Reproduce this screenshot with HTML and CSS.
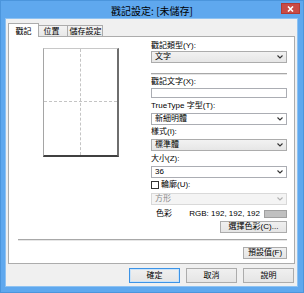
FILE: index.html
```html
<!DOCTYPE html>
<html lang="zh-Hant">
<head>
<meta charset="utf-8">
<link rel="stylesheet" href="styles.css">
</head>
<body>
<div class="window">
  <div class="titlebar">
    <span class="title">戳記設定: [未儲存]</span>
    <span class="close"><svg width="7" height="6" viewBox="0 0 7 6"><path d="M1 0.5 L6 5.5 M6 0.5 L1 5.5" stroke="#fff" stroke-width="1.6"/></svg></span>
  </div>
  <div class="client">
    <div class="tabs">
      <div class="tab active">戳記</div>
      <div class="tab t2">位置</div>
      <div class="tab t3">儲存設定</div>
      <div class="tabfill"></div>
    </div>
    <div class="panel">
      <div class="main">
        <div class="preview">
          <div class="vline"></div>
          <div class="hline"></div>
        </div>
        <div class="form">
          <div class="label">戳記類型(Y):</div>
          <div class="select"><span>文字</span><svg class="chev" width="6" height="4" viewBox="0 0 6 4"><polyline points="0.5,0.5 3,3 5.5,0.5" fill="none" stroke="#333" stroke-width="1.1"/></svg></div>
          <div class="sep"></div>
          <div class="label l2">戳記文字(X):</div>
          <div class="input"></div>
          <div class="label l3">TrueType 字型(T):</div>
          <div class="select white m2"><span>新細明體</span><svg class="chev" width="6" height="4" viewBox="0 0 6 4"><polyline points="0.5,0.5 3,3 5.5,0.5" fill="none" stroke="#333" stroke-width="1.1"/></svg></div>
          <div class="label l2">樣式(I):</div>
          <div class="select m2"><span>標準體</span><svg class="chev" width="6" height="4" viewBox="0 0 6 4"><polyline points="0.5,0.5 3,3 5.5,0.5" fill="none" stroke="#333" stroke-width="1.1"/></svg></div>
          <div class="label l3">大小(Z):</div>
          <div class="select white m2"><span>36</span><svg class="chev" width="6" height="4" viewBox="0 0 6 4"><polyline points="0.5,0.5 3,3 5.5,0.5" fill="none" stroke="#333" stroke-width="1.1"/></svg></div>
          <div class="check-row"><span class="box"></span><span>輪廓(U):</span></div>
          <div class="select disabled m3"><span>方形</span><svg class="chev" width="6" height="4" viewBox="0 0 6 4"><polyline points="0.5,0.5 3,3 5.5,0.5" fill="none" stroke="#b0b0b0" stroke-width="1.1"/></svg></div>
          <div class="color-row"><span class="clabel">色彩</span><span class="rgb">RGB: 192, 192, 192</span><span class="swatch"></span></div>
          <div class="btn-row"><div class="btn pick">選擇色彩(C)...</div></div>
        </div>
      </div>
      <div class="sep wide"></div>
      <div class="btn-row def-row"><div class="btn def">預設值(F)</div></div>
    </div>
    <div class="buttons">
      <div class="btn big default">確定</div>
      <div class="btn big">取消</div>
      <div class="btn big">說明</div>
    </div>
  </div>
</div>
</body>
</html>
```
FILE: styles.css
```css
* { box-sizing: border-box; }
html, body { margin: 0; padding: 0; }
body {
  font-family: "Liberation Sans", "Noto Sans CJK TC", sans-serif;
  font-size: 8px;
  color: #000;
  background: #fff;
}
.window {
  width: 304px;
  height: 293px;
  background: #5fa8ee;
  display: flex;
  flex-direction: column;
  box-shadow: inset 0 0 0 1px #4b95dc;
}
.titlebar {
  height: 19px;
  display: grid;
  grid-template-columns: 1fr auto 1fr;
}
.title {
  grid-column: 2;
  font-size: 10px;
  line-height: 19px;
  padding-top: 1px;
  font-family: "Noto Sans CJK TC", sans-serif;
}
.close {
  grid-column: 3;
  justify-self: end;
  align-self: start;
  width: 19px;
  height: 11px;
  margin-top: 3px;
  margin-right: 4px;
  background: #c94b45;
  border: 1px solid #b23a35;
  display: flex;
  align-items: center;
  justify-content: center;
}
.close svg { display: block; }
.client {
  flex: 1;
  margin: 0 7px 7px 6px;
  background: #f0f0f0;
  box-shadow: 0 0 0 1px #8ec2f2;
  padding-top: 4px;
  display: flex;
  flex-direction: column;
}
.tabs {
  height: 14px;
  margin: 0 2px;
  display: flex;
  align-items: flex-end;
}
.tab {
  height: 12px;
  border: 1px solid #acacac;
  background: linear-gradient(#f3f3f3, #e8e8e8);
  line-height: 10px;
  text-align: center;
  white-space: nowrap;
  font-family: "Noto Sans CJK TC", sans-serif;
}
.tab.active {
  width: 31px;
  height: 14px;
  background: #fff;
  border-bottom: none;
  line-height: 13px;
}
.tab.t2 { width: 29px; border-left: none; padding-right: 3px; }
.tab.t3 { width: 36px; margin-left: -1px; padding-left: 1px; }
.tabfill {
  flex: 1;
  border-bottom: 1px solid #acacac;
  height: 1px;
}
.panel {
  height: 227px;
  margin: 0 2px;
  background: #fff;
  border: 1px solid #acacac;
  border-top: none;
  padding: 4px 7px 0 9px;
  display: flex;
  flex-direction: column;
}
.main { display: flex; }
.preview {
  margin-left: 25px;
  margin-top: 7px;
  width: 76px;
  height: 109px;
  background: #fff;
  border-top: 1px solid #c8c8c8;
  border-left: 1px solid #a5a5a5;
  border-right: 2px solid #6e6e6e;
  border-bottom: 2px solid #404040;
  display: grid;
  grid-template-columns: 1fr 1fr;
  grid-template-rows: 1fr 1fr;
}
.vline {
  grid-column: 1;
  grid-row: 1 / 3;
  border-right: 1px dashed #c4c4c4;
}
.hline {
  grid-column: 1 / 3;
  grid-row: 1;
  border-bottom: 1px dashed #c4c4c4;
}
.form {
  margin-left: auto;
  width: 136px;
  display: flex;
  flex-direction: column;
}
.label {
  height: 10px;
  line-height: 10px;
  white-space: nowrap;
}
.l2 { margin-top: 2px; }
.l3 { margin-top: 3px; }
.m2 { margin-top: 2px; }
.m3 { margin-top: 3px; }
.select {
  height: 12px;
  border: 1px solid #acacac;
  background: linear-gradient(#f2f2f2, #e6e6e6);
  display: flex;
  align-items: center;
  justify-content: space-between;
  padding: 0 3px 0 3px;
  line-height: 10px;
}
.select.white { background: #fff; border-color: #abadb3; }
.select.disabled { background: #f4f4f4; border-color: #d9d9d9; color: #8a8a8a; }
.chev { display: block; }
.sep {
  height: 2px;
  margin-top: 10px;
  border-top: 1px solid #a8a8a8;
  border-bottom: 1px solid #e6e6e6;
}
.input {
  height: 10px;
  margin-top: 1px;
  border: 1px solid #abadb3;
  background: #fff;
}
.check-row {
  margin-top: 2px;
  height: 10px;
  display: flex;
  align-items: center;
  line-height: 10px;
}
.box {
  width: 8px;
  height: 8px;
  border: 1px solid #333;
  background: #fff;
  margin-right: 2px;
}
.color-row {
  margin-top: 4px;
  height: 10px;
  display: flex;
  align-items: center;
  line-height: 10px;
}
.clabel { margin-left: 5px; }
.rgb { margin-left: auto; margin-right: 4px; }
.swatch {
  width: 23px;
  height: 8px;
  background: #c0c0c0;
  border: 1px solid #a0a0a0;
}
.btn-row { display: flex; justify-content: flex-end; margin-top: 2px; }
.btn {
  height: 12px;
  border: 1px solid #acacac;
  background: linear-gradient(#f0f0f0, #e5e5e5);
  text-align: center;
  line-height: 10px;
  white-space: nowrap;
}
.pick { width: 67px; }
.sep.wide { margin-top: 6px; }
.def-row { margin-top: 6px; }
.def { width: 44px; }
.buttons {
  margin-top: 4px;
  margin-right: 3px;
  display: flex;
  justify-content: flex-end;
  gap: 6px;
}
.btn.big {
  width: 51px;
  height: 15px;
  line-height: 13px;
}
.btn.default {
  border-color: #3c93e6;
  box-shadow: inset 0 0 0 1px #c9e3fa;
}
```
